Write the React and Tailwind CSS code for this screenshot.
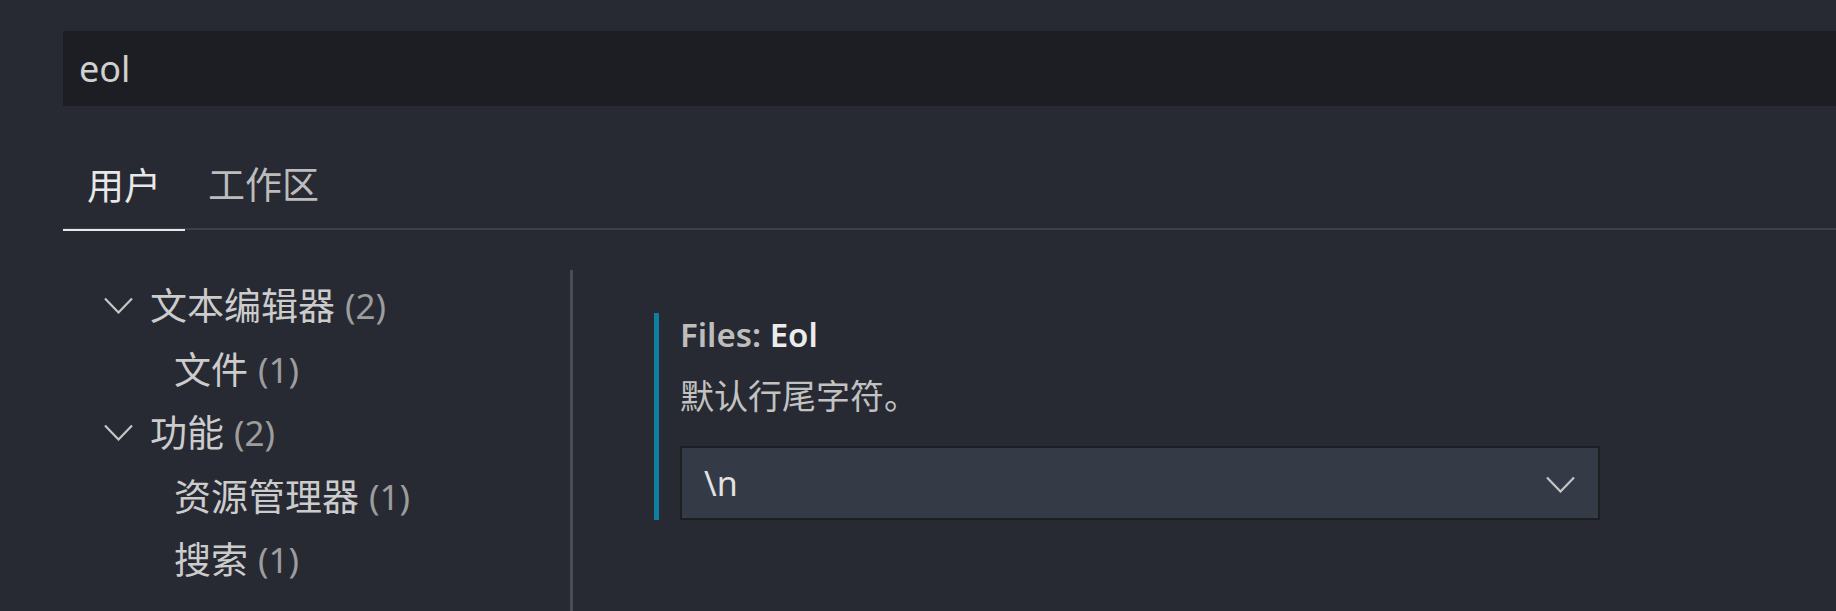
import React from "react";

const FONT = { fontFamily: "'Noto Sans', 'Noto Sans CJK SC', sans-serif" };

function Chevron({ className = "" }) {
  return (
    <svg width="29" height="17" viewBox="0 0 29 17" className={className} fill="none">
      <polyline points="1,1.5 14.5,15.5 28,1.5" stroke="#c5c5c5" strokeWidth="2.2" strokeLinejoin="miter" />
    </svg>
  );
}

function TreeRow({ label, count, level }) {
  return (
    <div
      className={
        "h-[63.5px] flex items-center text-[37px] leading-none " +
        (level === 0 ? "pl-[104px]" : "pl-[174px]")
      }
    >
      {level === 0 && <Chevron className="mr-[17px] shrink-0" />}
      <span className="text-[#cccccc]">{label}</span>
      <span className="text-[#9d9d9d] ml-[10px] text-[35px]">({count})</span>
    </div>
  );
}

export default function App() {
  return (
    <div className="h-[611px] w-full overflow-hidden bg-[#272a33]" style={FONT}>
      <div className="pt-[31px] pl-[63px]">
        <div className="h-[75px] bg-[#1d1e23] flex items-center pl-[16px] text-[36px] text-[#d0d0d0]">
          eol
        </div>
      </div>

      <div className="ml-[63px] mt-[36px] flex h-[88px] border-b-2 border-[#3c3f46]">
        <div className="px-[24px] flex items-center text-[37px] text-[#e8e8e8] border-b-2 border-[#e8e8e8] mb-[-3px]">
          用户
        </div>
        <div className="px-[23px] flex items-center text-[37px] text-[#bcbcbc]">工作区</div>
      </div>

      <div className="flex h-[400px]">
        <div className="w-[570px] pt-[44px]">
          <TreeRow label="文本编辑器" count={2} level={0} />
          <TreeRow label="文件" count={1} level={1} />
          <TreeRow label="功能" count={2} level={0} />
          <TreeRow label="资源管理器" count={1} level={1} />
          <TreeRow label="搜索" count={1} level={1} />
        </div>
        <div className="w-[3px] mt-[40px] bg-[#4a4d55]" />
        <div className="pl-[81px] pt-[83px]">
          <div className="border-l-[5px] border-[#0f7fa0] pl-[21px] h-[207px]">
            <div className="h-[44px] leading-[44px] text-[33px] font-semibold whitespace-nowrap">
              <span className="text-[#bdbdbd]">Files: </span>
              <span className="text-[#ececec]">Eol</span>
            </div>
            <div className="mt-[14px] h-[50px] leading-[50px] text-[34px] text-[#c2c2c2] whitespace-nowrap">
              默认行尾字符。
            </div>
            <div className="mt-[25px] w-[920px] h-[74px] border-2 border-[#1d1e22] bg-[#353b46] flex items-center justify-between pl-[22px] pr-[23px]">
              <span className="text-[34px] text-[#e2e2e2]">\n</span>
              <Chevron className="mt-[3px]" />
            </div>
          </div>
        </div>
      </div>
    </div>
  );
}
